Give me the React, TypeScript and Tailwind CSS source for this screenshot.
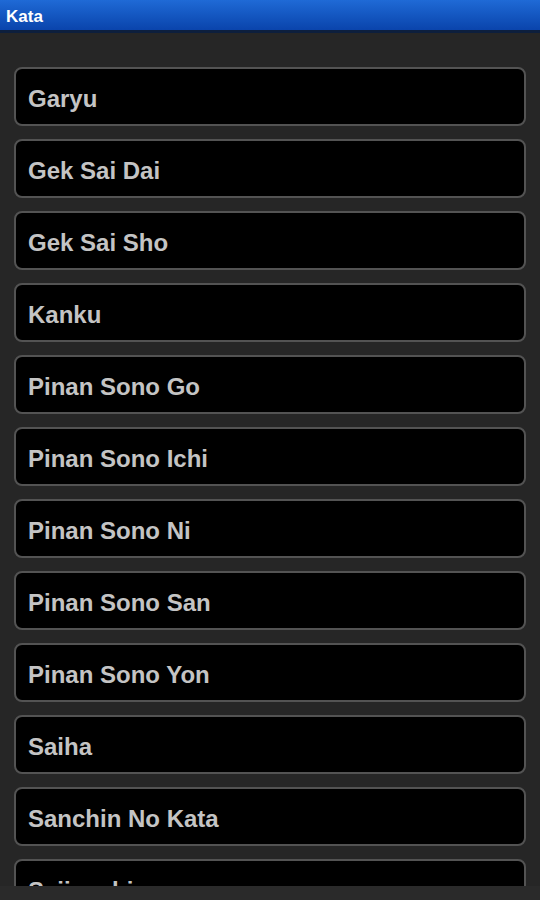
import React from "react";

const items = [
  "Garyu",
  "Gek Sai Dai",
  "Gek Sai Sho",
  "Kanku",
  "Pinan Sono Go",
  "Pinan Sono Ichi",
  "Pinan Sono Ni",
  "Pinan Sono San",
  "Pinan Sono Yon",
  "Saiha",
  "Sanchin No Kata",
  "Seiienchin",
];

export default function App() {
  return (
    <div className="w-[540px] h-[900px] bg-[#262626] flex flex-col overflow-hidden" style={{ fontFamily: '"Liberation Sans", Arial, sans-serif' }}>
      <div className="h-[33px] shrink-0 flex items-center px-[6px] bg-gradient-to-b from-[#1f6ad6] to-[#0a44ac] border-b-[3px] border-[#0d1f3d]">
        <span className="text-white font-bold text-[17px] leading-none translate-y-[1px]">Kata</span>
      </div>
      <div className="h-[853px] shrink-0 overflow-hidden px-[14px] pt-[34px] flex flex-col gap-[13px]">
        {items.map((t) => (
          <div
            key={t}
            className="h-[59px] shrink-0 rounded-[8px] border-2 border-[#535353] bg-black flex items-center pl-[12px]"
          >
            <span className="text-[#c4c4c4] text-[24px] font-bold leading-none translate-y-[2px]">{t}</span>
          </div>
        ))}
      </div>
      <div className="flex-1 bg-[#2a2a2a]" />
    </div>
  );
}
